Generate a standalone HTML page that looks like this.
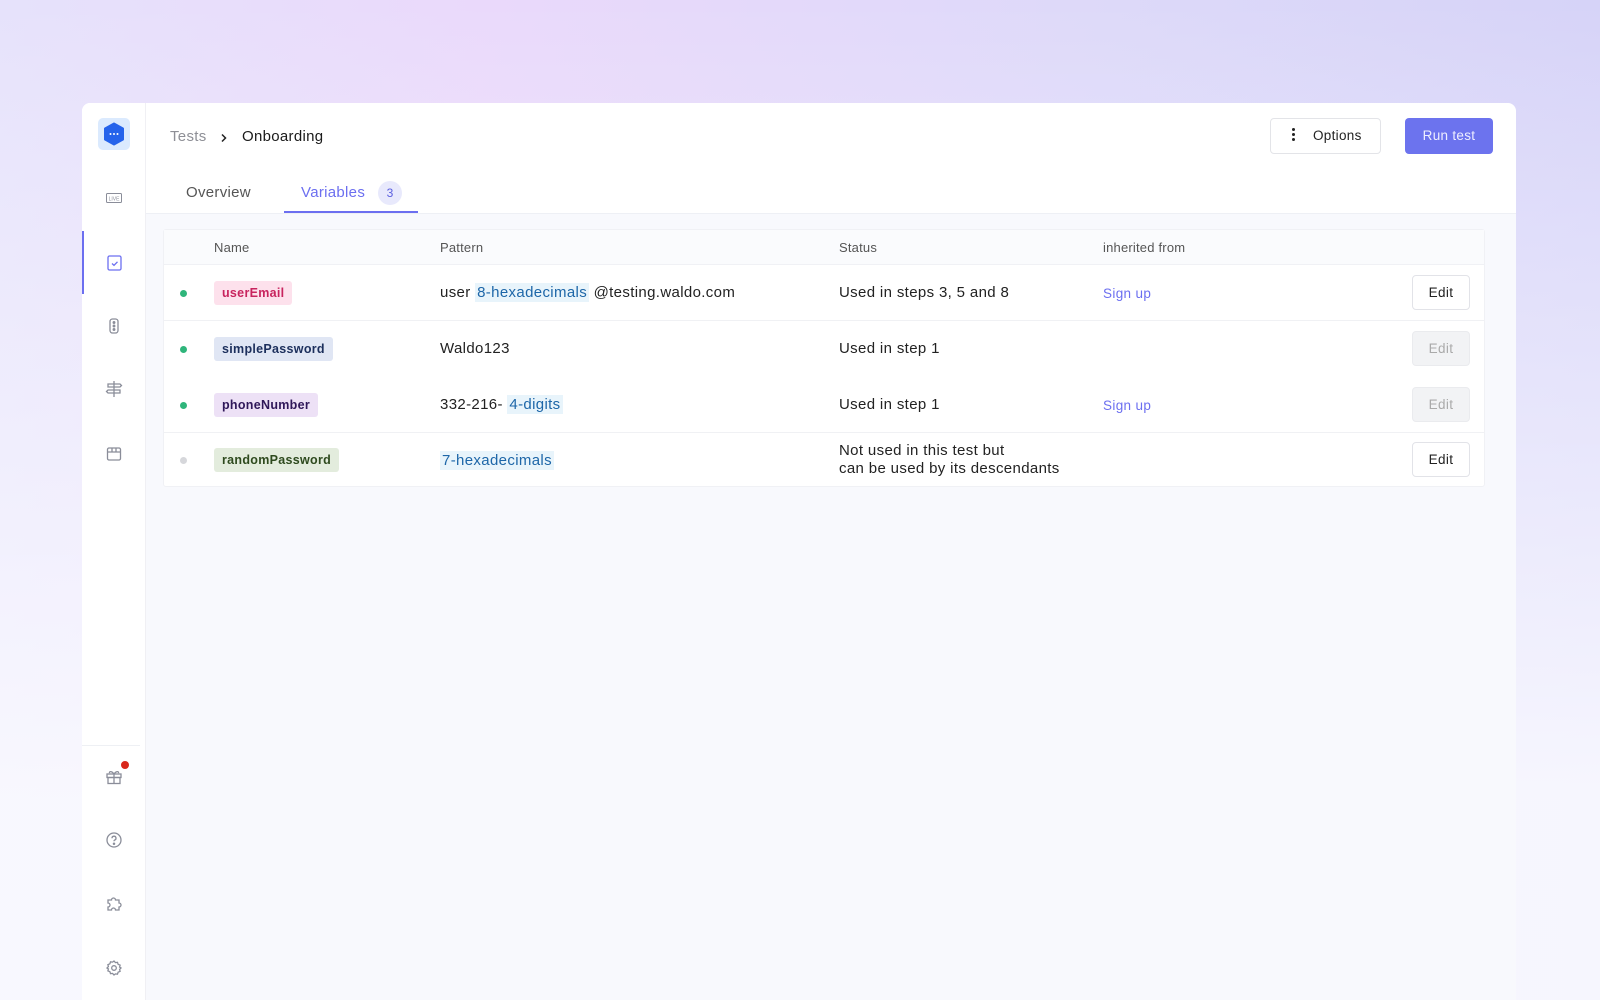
<!DOCTYPE html>
<html><head><meta charset="utf-8"><style>
*{box-sizing:border-box;margin:0;padding:0}
body{width:1600px;height:1000px;overflow:hidden;font-family:"Liberation Sans",sans-serif;background:linear-gradient(180deg,rgba(255,255,255,0) 0%,rgba(250,250,255,0.9) 80%),linear-gradient(90deg,#e6e2fb 0%,#ead9fb 30%,#ddd9f9 70%,#d6d3f8 100%);position:relative}
.card{position:absolute;left:82px;top:103px;width:1434px;height:897px;background:#fff;border-radius:8px 8px 0 0;overflow:hidden}
.side{position:absolute;left:0;top:0;width:64px;height:897px;background:#fff;border-right:1px solid #f0f0f4}
.content{position:absolute;left:64px;top:110px;right:0;bottom:0;background:#f8f9fd;border-top:1px solid #eef0f5}
.ic{position:absolute;left:21px;width:22px;height:22px}
.t{position:absolute;white-space:nowrap}
.table{position:absolute;left:17px;top:15px;width:1322px;height:258px;background:#fff;border:1px solid #f0f1f5;border-radius:3px}
.hdr{position:absolute;left:0;top:0;right:0;height:35px;background:#fafbfd;border-bottom:1px solid #f0f1f5;font-size:13px;color:#555;letter-spacing:0.2px}
.row{position:absolute;left:0;right:0;height:56px;border-bottom:1px solid #f0f1f4;font-size:15px;color:#222;letter-spacing:0.35px}
.dot{position:absolute;left:16px;top:25px;width:7px;height:7px;border-radius:50%;background:#2fb57b}
.tag{position:absolute;left:50px;top:16px;height:24px;line-height:24px;padding:0 8px;border-radius:3px;font-size:12.5px;font-weight:bold;letter-spacing:0.3px}
.hl{background:#e8f4fb;color:#1d66a8;padding:1px 2px}
.edit{position:absolute;left:1248px;top:10px;width:58px;height:35px;border:1px solid #e2e3e8;border-radius:4px;text-align:center;line-height:33px;font-size:13.5px;color:#222;background:#fff}
.edit.dis{background:#f2f3f5;color:#aaa;border-color:#eaebee}
.link{color:#6c6ff0;font-size:13.5px}
</style></head><body>
<div class="card">
 <div class="side">
  <div style="position:absolute;left:16px;top:15px;width:32px;height:32px;border-radius:5px;background:#dbeafe"></div>
  <svg style="position:absolute;left:19px;top:18px" width="26" height="26" viewBox="0 0 26 26"><path d="M13 2.5 22 7.5V18.5L13 23.5 4 18.5V7.5Z" fill="#2563eb" stroke="#2563eb" stroke-width="2" stroke-linejoin="round"/><circle cx="9.5" cy="13" r="1" fill="#fff"/><circle cx="13" cy="13" r="1" fill="#fff"/><circle cx="16.5" cy="13" r="1" fill="#fff"/></svg>
  <svg class="ic" style="top:84px" viewBox="0 0 22 22"><rect x="3.5" y="6.5" width="15" height="9" rx="1" fill="none" stroke="#8a8d99"/><text x="11" y="13.3" font-size="5" text-anchor="middle" fill="#8a8d99" font-family="Liberation Sans">LIVE</text></svg>
  <div style="position:absolute;left:0;top:128px;width:2px;height:63px;background:#6c6ff0"></div>
  <svg class="ic" style="top:149px" viewBox="0 0 22 22" fill="none" stroke="#6c6ff0" stroke-width="1.3"><rect x="5" y="4" width="13" height="14" rx="1.5"/><path d="M9 11.5l2 1.8 3.5-3.5"/></svg>
  <svg class="ic" style="top:212px" viewBox="0 0 22 22" fill="none" stroke="#8a8d99" stroke-width="1.3"><rect x="7" y="4" width="8" height="14" rx="2.5"/><circle cx="11" cy="7.5" r=".8" fill="#8a8d99"/><circle cx="11" cy="11" r=".8" fill="#8a8d99"/><circle cx="11" cy="14.5" r=".8" fill="#8a8d99"/></svg>
  <svg class="ic" style="top:275px" viewBox="0 0 22 22" fill="none" stroke="#8a8d99" stroke-width="1.3"><path d="M11 3v16M5 6h12l1.5 1.5L17 9H5zM17 12H5l-1.5 1.5L5 15h12z"/></svg>
  <svg class="ic" style="top:340px" viewBox="0 0 22 22" fill="none" stroke="#8a8d99" stroke-width="1.3"><rect x="4.5" y="5" width="13" height="12" rx="1.5"/><path d="M4.5 9h13M9 5v4M13 5v4"/></svg>
  <div style="position:absolute;left:0;top:642px;width:58px;height:1px;background:#eef0f4"></div>
  <svg class="ic" style="top:663px" viewBox="0 0 22 22" fill="none" stroke="#8a8d99" stroke-width="1.3"><rect x="4" y="8" width="14" height="3.5"/><rect x="5" y="11.5" width="12" height="6"/><path d="M11 8v9.5M11 8c-2-3-5-3-4.5-.8M11 8c2-3 5-3 4.5-.8"/></svg>
  <div style="position:absolute;left:39px;top:658px;width:8px;height:8px;border-radius:50%;background:#d9281c"></div>
  <svg class="ic" style="top:726px" viewBox="0 0 22 22" fill="none" stroke="#8a8d99" stroke-width="1.3"><circle cx="11" cy="11" r="7"/><path d="M9 9.2a2 2 0 1 1 2.6 1.9c-.5.2-.6.6-.6 1.2"/><circle cx="11" cy="14.7" r=".6" fill="#8a8d99"/></svg>
  <svg class="ic" style="top:789px" viewBox="0 0 22 22" fill="none" stroke="#8a8d99" stroke-width="1.3"><path d="M5 8h3.5a2 2 0 1 1 4 0H16v3a2 2 0 1 1 0 4v3H12.5a2 2 0 1 0-4 0H5v-3a2 2 0 1 0 0-4z"/></svg>
  <svg class="ic" style="top:854px" viewBox="0 0 22 22" fill="none" stroke="#8a8d99" stroke-width="1.3"><circle cx="11" cy="11" r="2.3"/><path d="M11 4l1.4 1.6 2.1-.3.6 2 2 .8-.5 2L18 11l-1.4 1.4.5 2-2 .8-.6 2-2.1-.3L11 18l-1.4-1.6-2.1.3-.6-2-2-.8.5-2L4 11l1.4-1.4-.5-2 2-.8.6-2 2.1.3z"/></svg>
 </div>
 <div class="t" style="left:88px;top:25px;font-size:15px;color:#8e8f96;letter-spacing:0.3px">Tests</div>
 <svg style="position:absolute;left:137px;top:30px" width="10" height="10" viewBox="0 0 10 10"><path d="M3 1.5l3.5 3.5L3 8.5" fill="none" stroke="#222" stroke-width="1.5"/></svg>
 <div class="t" style="left:160px;top:25px;font-size:15px;color:#1a1a1a;letter-spacing:0.3px">Onboarding</div>
 <div style="position:absolute;left:1188px;top:15px;width:111px;height:36px;border:1px solid #e3e4e8;border-radius:4px"></div>
 <div style="position:absolute;left:1210px;top:25px;width:3px;height:3px;border-radius:50%;background:#222;box-shadow:0 5px 0 #222,0 10px 0 #222"></div>
 <div class="t" style="left:1231px;top:25px;font-size:13.5px;color:#222;letter-spacing:0.3px">Options</div>
 <div style="position:absolute;left:1323px;top:15px;width:88px;height:36px;border-radius:4px;background:#6c73ee;color:#eef;font-size:13.5px;text-align:center;line-height:36px;letter-spacing:0.3px">Run test</div>
 <div class="t" style="left:104px;top:81px;font-size:15px;color:#555;letter-spacing:0.3px">Overview</div>
 <div class="t" style="left:219px;top:81px;font-size:15px;color:#6c6ff0;letter-spacing:0.3px">Variables</div>
 <div style="position:absolute;left:296px;top:78px;width:24px;height:24px;border-radius:50%;background:#e8e9fc;color:#5b5fe0;font-size:12px;text-align:center;line-height:24px">3</div>
 <div style="position:absolute;left:202px;top:108px;width:134px;height:2px;background:#6c6ff0"></div>
 <div class="content">
  <div class="table">
   <div class="hdr"><span class="t" style="left:50px;top:10px">Name</span><span class="t" style="left:276px;top:10px">Pattern</span><span class="t" style="left:675px;top:10px">Status</span><span class="t" style="left:939px;top:10px">inherited from</span></div>
   <div class="row" style="top:35px"><div class="dot"></div><div class="tag" style="background:#fde1ec;color:#c8245e">userEmail</div>
    <div class="t" style="left:276px;top:19px">user <span class="hl">8-hexadecimals</span> @testing.waldo.com</div>
    <div class="t" style="left:675px;top:19px">Used in steps 3, 5 and 8</div><div class="t link" style="left:939px;top:21px">Sign up</div><div class="edit">Edit</div></div>
   <div class="row" style="top:91px;border-bottom-color:transparent"><div class="dot"></div><div class="tag" style="background:#e0e6f4;color:#1c2f5c">simplePassword</div>
    <div class="t" style="left:276px;top:19px">Waldo123</div>
    <div class="t" style="left:675px;top:19px">Used in step 1</div><div class="edit dis">Edit</div></div>
   <div class="row" style="top:147px"><div class="dot"></div><div class="tag" style="background:#ede1f6;color:#2f1759">phoneNumber</div>
    <div class="t" style="left:276px;top:19px">332-216- <span class="hl">4-digits</span></div>
    <div class="t" style="left:675px;top:19px">Used in step 1</div><div class="t link" style="left:939px;top:21px">Sign up</div><div class="edit dis">Edit</div></div>
   <div class="row" style="top:202px;border-bottom:none"><div class="dot" style="background:#d6d7db"></div><div class="tag" style="background:#e3ecdd;color:#2e4a1e">randomPassword</div>
    <div class="t" style="left:276px;top:20px"><span class="hl">7-hexadecimals</span></div>
    <div class="t" style="left:675px;top:10px;line-height:18px">Not used in this test but<br>can be used by its descendants</div><div class="edit">Edit</div></div>
  </div>
 </div>
</div>
</body></html>
